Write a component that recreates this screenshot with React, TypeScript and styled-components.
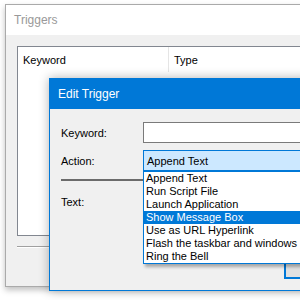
import styled, { createGlobalStyle } from "styled-components";

const GlobalStyle = createGlobalStyle`
  body {
    margin: 0;
    background: #fff;
    font-family: "Segoe UI", "Liberation Sans", Arial, sans-serif;
    font-size: 11px;
    color: #000;
  }
`;

const Desktop = styled.div`
  position: relative;
  width: 300px;
  height: 300px;
  overflow: hidden;
  background: #fff;
`;

const OuterWindow = styled.div`
  position: absolute;
  left: 5px;
  top: 4px;
  width: 340px;
  height: 283px;
  box-sizing: border-box;
  border: 1px solid #aaaaaa;
  background: #f0f0f0;
  box-shadow: 0 3px 6px rgba(0, 0, 0, 0.25);
  display: flex;
  flex-direction: column;
`;

const TitleBar = styled.div<{ $active?: boolean }>`
  height: 30px;
  flex-shrink: 0;
  display: flex;
  align-items: center;
  padding-left: 8px;
  font-size: 12px;
  background: ${(p) => (p.$active ? "#0078d7" : "#fff")};
  color: ${(p) => (p.$active ? "#fff" : "#999")};
`;

const OuterBody = styled.div`
  padding: 11px 11px 0 11px;
  display: flex;
  flex-direction: column;
`;

const ListView = styled.div`
  height: 190px;
  box-sizing: border-box;
  border: 1px solid #828790;
  background: #fff;
`;

const ListHeader = styled.div`
  height: 25px;
  display: flex;
`;

const HeaderCell = styled.div<{ $width?: number }>`
  width: ${(p) => (p.$width ? `${p.$width}px` : "auto")};
  flex: ${(p) => (p.$width ? "none" : "1")};
  box-sizing: border-box;
  padding-left: 5px;
  display: flex;
  align-items: center;
  border-right: 1px solid #e5e5e5;
`;

const Etched = styled.div<{ $dark?: boolean }>`
  height: ${(p) => (p.$dark ? "2px" : "1px")};
  background: ${(p) => (p.$dark ? "#6b6b6b" : "#a0a0a0")};
  border-bottom: ${(p) => (p.$dark ? "none" : "1px solid #fff")};
`;

const OuterSeparator = styled(Etched)`
  margin-top: 10px;
`;

const Dialog = styled.div`
  position: absolute;
  left: 49px;
  top: 78px;
  width: 403px;
  height: 213px;
  box-sizing: border-box;
  border: 1px solid #0078d7;
  background: #f0f0f0;
  box-shadow: 0 0 10px rgba(0, 0, 0, 0.3);
  display: flex;
  flex-direction: column;
`;

const DialogBody = styled.div`
  flex: 1;
  padding: 13px 11px 11px 11px;
  display: flex;
  flex-direction: column;
`;

const FormGrid = styled.div`
  display: grid;
  grid-template-columns: 82px 1fr;
  grid-auto-rows: 21px;
  row-gap: 7px;
`;

const Label = styled.div`
  display: flex;
  align-items: center;
`;

const TextBox = styled.div`
  box-sizing: border-box;
  border: 1px solid #7a7a7a;
  background: #fff;
`;

const ComboWrap = styled.div`
  position: relative;
`;

const Combo = styled.div`
  height: 100%;
  box-sizing: border-box;
  border: 1px solid #0078d7;
  background: #cce8ff;
  padding-left: 3px;
  display: flex;
  align-items: center;
`;

const DropList = styled.ul`
  position: absolute;
  left: 0;
  right: 0;
  top: 100%;
  z-index: 2;
  margin: 0;
  padding: 0;
  list-style: none;
  border: 1px solid #0078d7;
  background: #fff;
  box-shadow: 2px 3px 3px rgba(0, 0, 0, 0.3);
`;

const DropItem = styled.li<{ $selected?: boolean }>`
  height: 13px;
  line-height: 13px;
  padding-left: 2px;
  white-space: nowrap;
  background: ${(p) => (p.$selected ? "#0078d7" : "transparent")};
  color: ${(p) => (p.$selected ? "#fff" : "#000")};
`;

const DialogSeparator = styled(Etched)`
  margin-top: 8px;
`;

const TextRow = styled.div`
  margin-top: 13px;
  height: 16px;
  display: flex;
  align-items: center;
`;

const ButtonRow = styled.div`
  margin-top: auto;
  display: flex;
  justify-content: flex-end;
  gap: 6px;
`;

const Button = styled.div<{ $default?: boolean }>`
  width: 75px;
  height: 23px;
  box-sizing: border-box;
  border: ${(p) => (p.$default ? "2px solid #0078d7" : "1px solid #adadad")};
  background: #e1e1e1;
`;

const actions = [
  "Append Text",
  "Run Script File",
  "Launch Application",
  "Show Message Box",
  "Use as URL Hyperlink",
  "Flash the taskbar and windows",
  "Ring the Bell",
];

export default function App() {
  return (
    <>
      <GlobalStyle />
      <Desktop>
        <OuterWindow>
          <TitleBar>Triggers</TitleBar>
          <OuterBody>
            <ListView>
              <ListHeader>
                <HeaderCell $width={151}>Keyword</HeaderCell>
                <HeaderCell>Type</HeaderCell>
              </ListHeader>
            </ListView>
            <OuterSeparator />
          </OuterBody>
        </OuterWindow>
        <Dialog>
          <TitleBar $active>Edit Trigger</TitleBar>
          <DialogBody>
            <FormGrid>
              <Label>Keyword:</Label>
              <TextBox />
              <Label>Action:</Label>
              <ComboWrap>
                <Combo>Append Text</Combo>
                <DropList>
                  {actions.map((a) => (
                    <DropItem key={a} $selected={a === "Show Message Box"}>
                      {a}
                    </DropItem>
                  ))}
                </DropList>
              </ComboWrap>
            </FormGrid>
            <DialogSeparator $dark />
            <TextRow>Text:</TextRow>
            <ButtonRow>
              <Button $default aria-label="OK" />
              <Button aria-label="Cancel" />
            </ButtonRow>
          </DialogBody>
        </Dialog>
      </Desktop>
    </>
  );
}
